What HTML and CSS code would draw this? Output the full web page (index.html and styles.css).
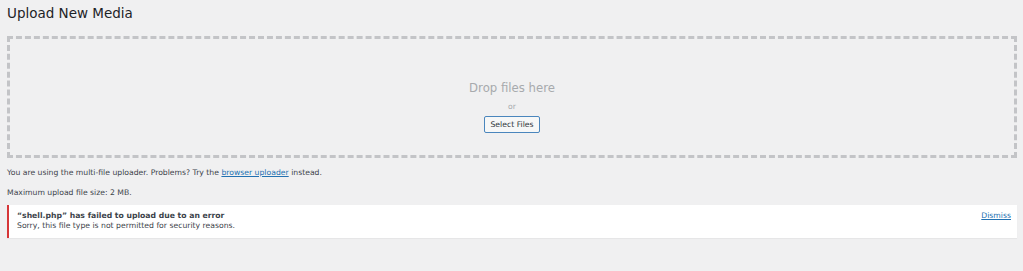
FILE: index.html
```html
<!DOCTYPE html>
<html lang="en">
<head>
<meta charset="utf-8">
<title>Upload New Media</title>
<link rel="stylesheet" href="styles.css">
</head>
<body>
<div class="wrap">
  <h1 class="page-title">Upload New Media</h1>
  <div class="drop-area">
    <p class="drop-info">Drop files here</p>
    <p class="drop-or">or</p>
    <button class="select-btn" type="button">Select Files</button>
  </div>
  <p class="info-line first">You are using the multi-file uploader. Problems? Try the <a href="#" class="link">browser uploader</a> instead.</p>
  <p class="info-line second">Maximum upload file size: 2 MB.</p>
  <div class="notice">
    <div class="notice-text">
      <strong class="notice-title">“shell.php” has failed to upload due to an error</strong>
      <span class="notice-msg">Sorry, this file type is not permitted for security reasons.</span>
    </div>
    <a href="#" class="link dismiss">Dismiss</a>
  </div>
</div>
</body>
</html>
```

FILE: styles.css
```css
html, body {
  margin: 0;
  padding: 0;
  background: #f0f0f1;
}
body {
  font-family: "DejaVu Sans", "Noto Sans", sans-serif;
  color: #3c434a;
  width: 1023px;
  height: 271px;
  overflow: hidden;
}
.wrap {
  padding: 5px 6px 0 7px;
  display: flex;
  flex-direction: column;
}
.page-title {
  margin: 0;
  font-size: 13.5px;
  line-height: 17.5px;
  font-weight: 400;
  color: #1d2327;
}
.drop-area {
  margin-top: 13.5px;
  border: 3px dashed #c3c4c7;
  display: flex;
  flex-direction: column;
  align-items: center;
  padding-top: 41.5px;
  box-sizing: content-box;
  height: 74.5px;
}
.drop-info {
  margin: 0;
  font-size: 11.7px;
  line-height: 14px;
  color: #a7aaad;
}
.drop-or {
  margin: 7px 0 0;
  font-size: 7.7px;
  line-height: 10px;
  color: #a7aaad;
}
.select-btn {
  margin-top: 4.6px;
  height: 17px;
  width: 56px;
  padding: 0;
  border: 1px solid #4a86bd;
  border-radius: 2px;
  background: #f6f7f7;
  color: #2c3338;
  font-family: "DejaVu Sans", sans-serif;
  font-size: 7.7px;
  line-height: 15px;
}
.info-line {
  margin: 0;
  font-size: 7.7px;
  line-height: 10px;
}
.info-line.first {
  margin-top: 10px;
}
.info-line.second {
  margin-top: 10px;
}
.link {
  color: #2271b1;
  text-decoration: underline;
}
.notice {
  margin-top: 7px;
  background: #fff;
  border-left: 2px solid #d63638;
  box-shadow: 0 1px 1px rgba(0,0,0,0.04);
  display: flex;
  justify-content: space-between;
  align-items: flex-start;
  padding: 6.4px 6px 6.6px 8px;
  font-size: 7.7px;
  line-height: 10px;
}
.notice-text {
  display: flex;
  flex-direction: column;
}
.notice-title {
  font-weight: 700;
  color: #3c434a;
}
.dismiss {
  font-size: 7.7px;
}
```
